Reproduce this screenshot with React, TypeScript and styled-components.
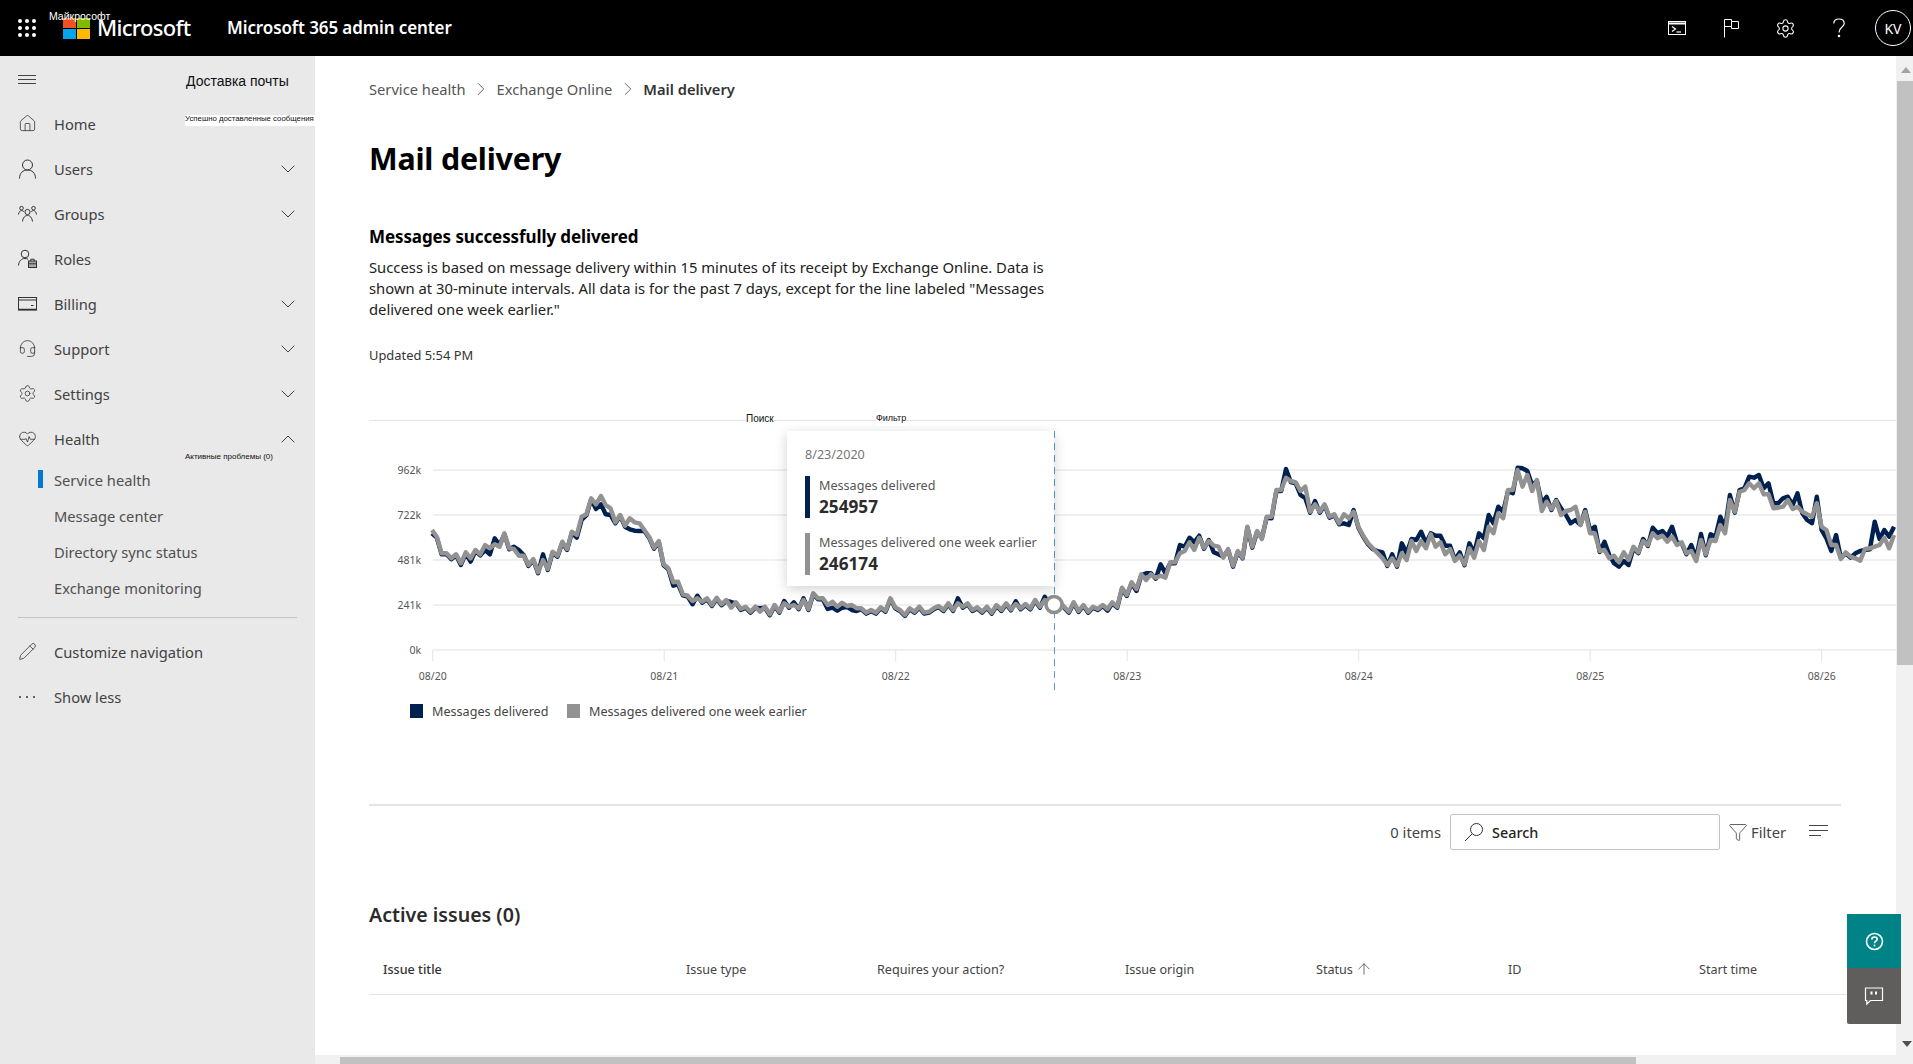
import React from "react";
import styled, { createGlobalStyle } from "styled-components";
import { ChevronDown, ChevronUp, Funnel, HeartPulse, Headset, House, Pencil, Settings, ArrowUp, ChevronRight } from "lucide-react";

const Global = createGlobalStyle`
  html, body { margin: 0; padding: 0; height: 100%; overflow: hidden; background: #fff; }
  body { font-family: "Noto Sans", "Open Sans", sans-serif; color: #323130; }
  * { box-sizing: border-box; }
`;

const Page = styled.div`
  width: 1913px; height: 1064px; display: flex; flex-direction: column; position: relative; overflow: hidden;
`;
const Header = styled.header`
  height: 56px; background: #000; color: #fff; display: flex; align-items: center; position: relative; flex: none;
`;
const Waffle = styled.div`
  margin-left: 18px; width: 18px; display: grid; grid-template-columns: repeat(3, 4px); gap: 3px; flex: none;
  span { width: 4px; height: 4px; background: #fff; border-radius: 50%; }
`;
const LogoMark = styled.div`
  margin-left: 27px; width: 27px; height: 21px; display: grid; grid-template-columns: 13px 13px; grid-template-rows: 10px 10px; gap: 1px; flex: none;
`;
const LogoSquare = styled.span<{ $c: string }>` background: ${p => p.$c}; `;
const Brand = styled.span`
  margin-left: 7px; font-size: 22px; font-weight: 500; letter-spacing: -0.7px; width: 130px; margin-top: -2px;
`;
const AppName = styled.span`
  font-size: 17px; font-weight: 600; letter-spacing: -0.1px; margin-top: -1px;
`;
const HeaderTools = styled.div`
  margin-left: auto; display: flex; align-items: center; padding-right: 2px;
`;
const ToolIcon = styled.span`
  width: 54px; display: flex; align-items: center; justify-content: center; color: #fff;
`;
const Avatar = styled.span`
  width: 36px; height: 36px; border: 1px solid #fff; border-radius: 50%; display: flex; align-items: center; justify-content: center; font-size: 14px; margin-left: 9px;
`;
const OverLabel = styled.span<{ $x: number; $y: number; $size: number; $white?: boolean; $bg?: boolean; $w?: number }>`
  position: absolute; left: ${p => p.$x}px; top: ${p => p.$y}px; font-family: "Liberation Sans", Arial, sans-serif; font-size: ${p => p.$size}px;
  line-height: ${p => (p.$bg ? "7px" : "1")}; white-space: nowrap; color: ${p => (p.$white ? "#fff" : "#111")};
  ${p => (p.$bg ? "background: #fff; padding-bottom: 4px;" : "")}
  ${p => (p.$w ? `width: ${p.$w}px;` : "")}
`;

const Body = styled.div` flex: 1; display: flex; min-height: 0; `;
const Sidebar = styled.nav`
  width: 315px; flex: none; background: #e9e9e9; position: relative; display: flex; flex-direction: column;
`;
const BurgerRow = styled.div`
  height: 45px; flex: none; padding: 0 0 0 18px; display: flex; align-items: center;
`;
const Burger = styled.div`
  width: 18px; height: 9px; border-top: 1px solid #444; border-bottom: 1px solid #444; position: relative; margin-top: 1px;
  &::after { content: ""; position: absolute; left: 0; right: 0; top: 3px; height: 1px; background: #444; }
`;
const NavRow = styled.div`
  height: 45px; flex: none; display: flex; align-items: center; padding-left: 18px; padding-right: 15px; color: #424242; font-size: 14.7px;
`;
const NavIcon = styled.span`
  width: 36px; flex: none; display: flex; align-items: center; color: #333;
`;
const NavText = styled.span` flex: 1; padding-top: 1px; `;
const SubRow = styled.div<{ $active?: boolean }>`
  height: 36px; flex: none; display: flex; align-items: center; padding: 1px 0 0 54px; font-size: 14.7px; color: #505050; position: relative;
  ${p => p.$active ? `&::before { content: ""; position: absolute; left: 38px; top: 9px; width: 5px; height: 18px; background: #0078d4; }` : ""}
`;
const SideDivider = styled.div`
  height: 1px; background: #c4c4c4; margin: 12px 18px 11px; flex: none;
`;

const MainColumn = styled.div` flex: 1; display: flex; flex-direction: column; min-width: 0; `;
const MainRow = styled.div` flex: 1; display: flex; min-height: 0; `;
const Content = styled.main`
  flex: 1; min-width: 0; padding: 21px 0 0 54px; overflow: hidden;
`;
const Crumbs = styled.div`
  display: flex; align-items: center; font-size: 14.7px; line-height: 24px; color: #555; height: 24px;
`;
const CrumbSep = styled.span` width: 31px; display: flex; justify-content: center; color: #555; `;
const CrumbCurrent = styled.span` font-weight: 600; font-size: 14.7px; color: #333; `;
const Title = styled.h1`
  margin: 38px 0 0; font-size: 30.4px; line-height: 40px; font-weight: 700; color: #000; letter-spacing: -0.2px;
`;
const SubHead = styled.h2`
  margin: 46px 0 0; font-size: 17px; line-height: 24px; font-weight: 700; color: #000; letter-spacing: -0.1px;
`;
const Para = styled.p`
  margin: 8px 0 0; width: 700px; font-size: 14.8px; line-height: 21px; color: #222;
`;
const Updated = styled.div`
  margin-top: 26px; font-size: 12.9px; line-height: 18px; color: #333;
`;
const ChartBox = styled.section`
  margin-top: 56px; height: 270px; position: relative; margin-left: 0;
  svg { display: block; }
`;
const Tooltip = styled.div`
  position: absolute; left: 418px; top: 11px; width: 267px; height: 155px; background: #fff; box-shadow: 0 3px 12px rgba(0,0,0,0.18); padding: 15px 18px;
`;
const TipDate = styled.div` font-size: 12.6px; line-height: 18px; color: #777; margin-bottom: 12px; `;
const TipRow = styled.div<{ $c: string }>`
  height: 42px; border-left: 5px solid ${p => p.$c}; padding: 1px 0 0 9px; margin-bottom: 15px;
`;
const TipLabel = styled.div` font-size: 12.6px; line-height: 18px; color: #555; white-space: nowrap; `;
const TipValue = styled.div` font-size: 17.2px; line-height: 24px; font-weight: 700; color: #2b2b2b; `;
const Legend = styled.div`
  margin-top: 11px; height: 20px; display: flex; align-items: center; padding-left: 41px; font-size: 12.6px; color: #444;
`;
const LegendItem = styled.span<{ $w: number }>` display: flex; align-items: center; width: ${p => p.$w}px; flex: none; white-space: nowrap; `;
const Swatch = styled.span<{ $c: string }>`
  width: 13px; height: 14px; background: ${p => p.$c}; margin-right: 9px; flex: none;
`;
const Divider = styled.div`
  margin-top: 83px; margin-right: 55px; height: 2px; background: #e4e4e4;
`;
const Toolbar = styled.div`
  margin-top: 8px; margin-right: 55px; height: 36px; display: flex; align-items: center; font-size: 14.8px; color: #444;
`;
const ItemCount = styled.span` margin-left: auto; margin-right: 9px; `;
const SearchBox = styled.div`
  width: 270px; height: 36px; border: 1px solid #c4c4c4; border-radius: 2px; display: flex; align-items: center; padding-left: 13px; gap: 8px; color: #222; font-weight: 500; font-size: 14.4px;
`;
const FilterBtn = styled.span` margin-left: 8px; display: flex; align-items: center; gap: 3px; width: 81px; `;
const SortLines = styled.span`
  width: 19px; height: 12px; margin-right: 13px; margin-top: -2px; flex: none; position: relative; border-top: 1px solid #444;
  &::before { content: ""; position: absolute; left: 0; top: 4px; width: 19px; height: 1px; background: #444; }
  &::after { content: ""; position: absolute; left: 0; top: 9px; width: 12px; height: 1px; background: #444; }
`;
const SectionHead = styled.h3`
  margin: 52px 0 0; font-size: 19.6px; line-height: 26px; font-weight: 600; color: #2b2b2b;
`;
const TableHead = styled.div`
  margin-top: 16px; height: 51px; border-bottom: 1px solid #e4e4e4; display: grid; grid-template-columns: 303px 191px 248px 191px 192px 191px 1fr; align-items: center; padding-left: 14px; font-size: 12.6px; color: #444;
`;
const ColHead = styled.span<{ $strong?: boolean }>`
  display: flex; align-items: center; gap: 2px;
  ${p => p.$strong ? "font-weight: 500; color: #333;" : ""}
`;

const VScroll = styled.div`
  width: 17px; flex: none; background: #f1f1f1; padding-top: 25px; position: relative;
  &::before { content: ""; position: absolute; left: 5px; top: 11px; border: 5px solid transparent; border-top: 0; border-bottom: 6px solid #a3a3a3; }
  &::after { content: ""; position: absolute; left: 6px; bottom: 8px; border: 5px solid transparent; border-bottom: 0; border-top: 6px solid #505050; }
`;
const VThumb = styled.div` height: 584px; background: #c1c1c1; margin-left: 1px; `;
const HScroll = styled.div`
  height: 9px; flex: none; background: #f1f1f1; padding: 2px 277px 0 25px;
`;
const HThumb = styled.div` height: 7px; background: #c1c1c1; `;
const FloatStack = styled.div`
  position: absolute; left: 1847px; top: 914px; width: 54px; display: flex; flex-direction: column;
`;
const FloatBtn = styled.div<{ $c: string; $h: number; $round?: boolean }>`
  height: ${p => p.$h}px; background: ${p => p.$c}; display: flex; align-items: center; justify-content: center; color: #fff;
  ${p => (p.$round ? "border-radius: 0 0 0 2px;" : "")}
`;

/* ---- chart data, traced from the picture: one value per half hour ---- */
const segA = [195,215,265,265,280,268,295,262,280,255,268,240,250,238,245,205,250,252,272,272,300,282,322,285,312,260,272,230,252,200,210,155,148,100,118,93,120,130,172,150,182,160,172,175,195,215,248,228,298,310,352,350,388,392,408,400,410,400,420,398,418,405,428,412,432,425,440,425,440,425,448,420,440,415,425,420,430,405,432];
const segB = [520,535,535,555,545,560,548,558,555,565,565,578,570,578,562,572,535,562,570,585,565,575,560,578,575,565,558,570,550,570,550,560,550,570,562,575,560,578,555,570,550,568,552,565,552,565,540,560,540,565,555,545];
const segC = [425,440,412,438,420,440,425,432,420,432,412,425,368,390,352,372,328,345,328,338,332,338,292,292,265,258,232,255,218,248,228,242,245,278,252,302,258,278,185,245,198,222,155,155,75,75,38,48,52,78,65,140,118,140,118,155,148,175,148,160,140,185,212,235,250,265,280,300,280,302,265,285,228,258,228,250,208,245,232,268,252,288,272,298,250,278,228,255,185];
const segD = [205,145,160,75,75,15,65,30,78,45,138,110,132,108,150,138,135,125,180,140,205,205,258,255,280,272,292,262,285,245,262,228,240,205,220,212,230,215,240,232,265,258,288,225,268,225,228,180,205,105,140,80,75,55,70,55,88,88,130,128,125,105,132,125,140,148,155,115,185,195,240,240,282,262,275,280,287,252,250,245,240,218,250,210];
const deltas: Record<number, number> = {
  0:10,6:5,8:10,11:15,12:18,13:-18,14:-5,17:-7,18:-17,19:-2,23:-17,26:3,30:8,31:10,34:14,35:25,36:28,37:20,41:33,42:25,43:23,50:10,51:8,54:10,55:-8,62:-17,68:-10,73:-7,75:-8,77:-5,
  82:12,83:18,84:12,85:15,87:15,88:8,109:-15,121:-8,127:-10,128:-15,
  140:5,146:6,148:-20,149:-3,151:-34,152:-13,155:-25,156:-13,157:-14,158:-23,159:-6,161:-3,162:20,163:23,164:-3,168:2,172:-4,174:5,177:-26,180:12,181:35,183:-10,189:27,190:20,191:-5,196:-7,197:-18,199:-12,
  201:-30,202:-20,203:-6,204:-33,205:-28,206:-15,207:-3,208:-33,209:-20,210:-26,211:-10,212:-3,213:-10,215:-15,216:-13,217:-23,218:-35,219:-35,
  220:-30,221:-20,222:-20,224:10,225:-7,226:-55,227:-12,228:-18,230:-23,231:-15,233:-3,234:-20,235:12,236:40,237:40,238:0,239:-5,240:-10,241:-20,243:-25,244:-10,245:23,246:13,247:26,248:15,249:5,251:-6,253:-17,254:-15,255:-14,256:-15,257:-30,258:-8,260:3,261:-18,262:-8,263:-18,265:-17,266:-13,267:-25,268:-15,269:-15,271:-5,272:-5,273:-20,274:-32,275:-25,276:-18,277:-33,278:-15,279:-13,280:-25,281:-10,282:-12,283:-40,284:5,285:17,286:20,287:-20,288:10,289:25,290:18,291:-30,292:-2,295:-15,296:-29,299:-75,300:-18,301:-23,302:-35,303:-25,
};
const greyY = [
  ...segA.map(v => 465 + v / 3),
  ...segB.map(v => 420 + v / 3),
  ...segC.map(v => 465 + v / 3),
  ...segD.map(v => 465 + v / 3),
];
const stepX = (i: number) => 432 + i * 4.825;
const toPoints = (ys: number[]) => ys.map((y, i) => `${stepX(i).toFixed(1)},${y.toFixed(1)}`).join(" ");
const greyPts = toPoints(greyY);
const darkPts = toPoints(greyY.map((y, i) => y + (deltas[i] ?? 3) / 3));

const yTicks: [string, number][] = [["962k", 470], ["722k", 515], ["481k", 560], ["241k", 605], ["0k", 650]];
const days = ["08/20", "08/21", "08/22", "08/23", "08/24", "08/25", "08/26"];

const ChartDrawing = () => (
  <svg width={1527} height={270} viewBox="369 420 1527 270" fontFamily="Noto Sans, sans-serif">
    <line x1={369} x2={1896} y1={420.5} y2={420.5} stroke="#e3e3e3" strokeWidth={1} />
    {yTicks.map(([label, y]) => (
      <g key={label}>
        <line x1={433} x2={1896} y1={y} y2={y} stroke="#efefef" strokeWidth={2} />
        <text x={421} y={y + 4} textAnchor="end" fontSize={10.5} fill="#555">{label}</text>
      </g>
    ))}
    {days.map((d, i) => {
      const x = 432.7 + i * 231.5;
      return (
        <g key={d}>
          <line x1={x} x2={x} y1={650} y2={661} stroke="#e4e4e4" strokeWidth={1} />
          <text x={x} y={680} textAnchor="middle" fontSize={10.5} fill="#555">{d}</text>
        </g>
      );
    })}
    <polyline points={darkPts} fill="none" stroke="#002050" strokeWidth={4.4} strokeLinejoin="round" />
    <polyline points={greyPts} fill="none" stroke="#929292" strokeWidth={4.4} strokeLinejoin="round" />
    <line x1={1054.5} x2={1054.5} y1={431} y2={690} stroke="#5a9bd0" strokeWidth={1} strokeDasharray="7 5" />
    <circle cx={1054} cy={604.5} r={8} fill="#fff" stroke="#8f8f8f" strokeWidth={3.6} />
  </svg>
);

const TerminalIcon = () => (
  <svg width="20" height="18" viewBox="0 0 20 18" fill="none" stroke="#fff">
    <rect x="1.5" y="2.5" width="17" height="13" strokeWidth="1" />
    <line x1="1.5" y1="4.5" x2="18.5" y2="4.5" strokeWidth="2" />
    <path d="M5 7.5 L8.5 10 L5 12.5" strokeWidth="1.2" />
    <line x1="9.5" y1="13" x2="14" y2="13" strokeWidth="1.2" />
  </svg>
);
const FlagIcon = () => (
  <svg width="18" height="20" viewBox="0 0 18 20" fill="none" stroke="#fff" strokeWidth="1">
    <path d="M2.5 19.5 V1.5 H9.5 V3.5 H16.5 V10.5 H9.5 V8.5 H2.5" />
    <line x1="9.5" y1="3.5" x2="9.5" y2="8.5" />
  </svg>
);
const Question = () => (
  <svg width="14" height="20" viewBox="0 0 14 20" fill="none" stroke="#fff" strokeWidth="1.2">
    <path d="M1.8 5.5 C1.8 2.8 4 1 7 1 C10 1 12.2 2.8 12.2 5.4 C12.2 9 7 9.2 7 14.5" />
    <circle cx="7" cy="18" r="0.7" fill="#fff" />
  </svg>
);
const GroupsIcon = () => (
  <svg width="19" height="18" viewBox="0 0 19 18" fill="none" stroke="currentColor" strokeWidth="1">
    <circle cx="9.5" cy="7" r="2.6" /><path d="M4.5 16.5 C5 12.5 7 10.5 9.5 10.5 C12 10.5 14 12.5 14.5 16.5" />
    <circle cx="3.5" cy="3.2" r="1.8" /><path d="M0.5 9.5 C0.8 7 2 5.6 3.6 5.6 C4.5 5.6 5.2 6 5.8 6.6" />
    <circle cx="15.5" cy="3.2" r="1.8" /><path d="M18.5 9.5 C18.2 7 17 5.6 15.4 5.6 C14.5 5.6 13.8 6 13.2 6.6" />
  </svg>
);
const RolesIcon = () => (
  <svg width="19" height="19" viewBox="0 0 19 19" fill="none" stroke="currentColor" strokeWidth="1">
    <circle cx="7" cy="5" r="3.8" /><path d="M0.5 16.5 C0.8 12 3.5 9.5 7 9.5 C8 9.5 9 9.7 10 10.2" />
    <rect x="10.5" y="12" width="8" height="6.5" fill="currentColor" fillOpacity=".35" /><path d="M12.8 12 V10.2 H16.2 V12 M10.5 14.8 H18.5" />
  </svg>
);
const BillingIcon = () => (
  <svg width="19" height="14" viewBox="0 0 19 14" fill="none" stroke="currentColor">
    <rect x="0.5" y="0.5" width="18" height="12.5" strokeWidth="1" />
    <line x1="0.5" y1="3" x2="18.5" y2="3" strokeWidth="1" />
    <line x1="0.5" y1="12.5" x2="18.5" y2="12.5" strokeWidth="1.5" />
    <line x1="13" y1="8.5" x2="15.5" y2="8.5" strokeWidth="1" />
  </svg>
);
const UserIcon = () => (
  <svg width="19" height="20" viewBox="0 0 19 20" fill="none" stroke="currentColor" strokeWidth="1">
    <circle cx="9.5" cy="6" r="5" />
    <path d="M1.5 19.5 C1.5 14 5 11 9.5 11 C14 11 17.5 14 17.5 19.5" />
  </svg>
);
const MoreDots = () => (
  <svg width="18" height="4" viewBox="0 0 18 4" fill="currentColor">
    <circle cx="2" cy="2" r="1" /><circle cx="9" cy="2" r="1" /><circle cx="16" cy="2" r="1" />
  </svg>
);
const SearchIcon = () => (
  <svg width="20" height="20" viewBox="0 0 20 20" fill="none" stroke="#333" strokeWidth="1">
    <circle cx="12.5" cy="7.5" r="6" /><line x1="8.2" y1="11.8" x2="1" y2="19" />
  </svg>
);
const HelpCircle = () => (
  <svg width="19" height="19" viewBox="0 0 19 19" fill="none" stroke="#fff">
    <circle cx="9.5" cy="9.5" r="8" strokeWidth="1.6" />
    <path d="M6.8 7.4 C6.8 5.8 8 5 9.5 5 C11 5 12.2 5.9 12.2 7.2 C12.2 9 9.5 9.2 9.5 11.2" strokeWidth="1.6" />
    <circle cx="9.5" cy="13.6" r="1" fill="#fff" stroke="none" />
  </svg>
);
const ChatIcon = () => (
  <svg width="20" height="20" viewBox="0 0 20 20" fill="none" stroke="#fff" strokeWidth="1.2">
    <path d="M1.5 2 H18.5 V14.5 H6.5 L2.8 18 V14.5 H1.5 Z" />
    <rect x="6.5" y="5.5" width="2" height="3" fill="#fff" stroke="none" /><rect x="11" y="5.5" width="2" height="3" fill="#fff" stroke="none" />
  </svg>
);

const ico = { size: 19, strokeWidth: 1 };
const mainNav: { label: string; icon: React.ReactNode; chevron?: boolean }[] = [
  { label: "Home", icon: <House {...ico} /> },
  { label: "Users", icon: <UserIcon />, chevron: true },
  { label: "Groups", icon: <GroupsIcon />, chevron: true },
  { label: "Roles", icon: <RolesIcon /> },
  { label: "Billing", icon: <BillingIcon />, chevron: true },
  { label: "Support", icon: <Headset {...ico} />, chevron: true },
  { label: "Settings", icon: <Settings {...ico} />, chevron: true },
];
const subNav = ["Service health", "Message center", "Directory sync status", "Exchange monitoring"];
const columns = ["Issue type", "Requires your action?", "Issue origin"];
const logo = ["#f25022", "#7fba00", "#00a4ef", "#ffb900"];

export default function App() {
  return (
    <Page>
      <Global />
      <Header>
        <Waffle>{Array.from({ length: 9 }, (_, i) => <span key={i} />)}</Waffle>
        <LogoMark>{logo.map(c => <LogoSquare key={c} $c={c} />)}</LogoMark>
        <Brand>Microsoft</Brand>
        <AppName>Microsoft 365 admin center</AppName>
        <HeaderTools>
          <ToolIcon><TerminalIcon /></ToolIcon>
          <ToolIcon><FlagIcon /></ToolIcon>
          <ToolIcon><Settings size={21} strokeWidth={1.2} /></ToolIcon>
          <ToolIcon><Question /></ToolIcon>
          <Avatar>KV</Avatar>
        </HeaderTools>
        <OverLabel $x={49} $y={11} $size={10.5} $white>Майкрософт</OverLabel>
      </Header>
      <Body>
        <Sidebar>
          <BurgerRow><Burger /></BurgerRow>
          {mainNav.map(n => (
            <NavRow key={n.label}>
              <NavIcon>{n.icon}</NavIcon>
              <NavText>{n.label}</NavText>
              {n.chevron && <ChevronDown size={24} strokeWidth={1} />}
            </NavRow>
          ))}
          <NavRow>
            <NavIcon><HeartPulse {...ico} /></NavIcon>
            <NavText>Health</NavText>
            <ChevronUp size={24} strokeWidth={1} />
          </NavRow>
          {subNav.map((s, i) => <SubRow key={s} $active={i === 0}>{s}</SubRow>)}
          <SideDivider />
          <NavRow>
            <NavIcon><Pencil {...ico} /></NavIcon>
            <NavText>Customize navigation</NavText>
          </NavRow>
          <NavRow>
            <NavIcon><MoreDots /></NavIcon>
            <NavText>Show less</NavText>
          </NavRow>
          <OverLabel $x={186} $y={18} $size={14}>Доставка почты</OverLabel>
          <OverLabel $x={185} $y={59} $size={7.8} $bg $w={130}>Успешно доставленные сообщения</OverLabel>
          <OverLabel $x={185} $y={397} $size={8}>Активные проблемы (0)</OverLabel>
        </Sidebar>
        <MainColumn>
          <MainRow>
            <Content>
              <Crumbs>
                Service health
                <CrumbSep><ChevronRight size={22} strokeWidth={1} /></CrumbSep>
                Exchange Online
                <CrumbSep><ChevronRight size={22} strokeWidth={1} /></CrumbSep>
                <CrumbCurrent>Mail delivery</CrumbCurrent>
              </Crumbs>
              <Title>Mail delivery</Title>
              <SubHead>Messages successfully delivered</SubHead>
              <Para>
                Success is based on message delivery within 15 minutes of its receipt by Exchange Online. Data is<br />
                shown at 30-minute intervals. All data is for the past 7 days, except for the line labeled "Messages<br />
                delivered one week earlier."
              </Para>
              <Updated>Updated 5:54 PM</Updated>
              <ChartBox>
                <ChartDrawing />
                <Tooltip>
                  <TipDate>8/23/2020</TipDate>
                  <TipRow $c="#002050">
                    <TipLabel>Messages delivered</TipLabel>
                    <TipValue>254957</TipValue>
                  </TipRow>
                  <TipRow $c="#929292">
                    <TipLabel>Messages delivered one week earlier</TipLabel>
                    <TipValue>246174</TipValue>
                  </TipRow>
                </Tooltip>
                <OverLabel $x={377} $y={-5} $size={10} $bg>Поиск</OverLabel>
                <OverLabel $x={507} $y={-5} $size={9} $bg>Фильтр</OverLabel>
              </ChartBox>
              <Legend>
                <LegendItem $w={157}><Swatch $c="#002050" />Messages delivered</LegendItem>
                <LegendItem $w={260}><Swatch $c="#929292" />Messages delivered one week earlier</LegendItem>
              </Legend>
              <Divider />
              <Toolbar>
                <ItemCount>0 items</ItemCount>
                <SearchBox><SearchIcon />Search</SearchBox>
                <FilterBtn><Funnel size={20} strokeWidth={1} />Filter</FilterBtn>
                <SortLines />
              </Toolbar>
              <SectionHead>Active issues (0)</SectionHead>
              <TableHead>
                <ColHead $strong>Issue title</ColHead>
                {columns.map(c => <ColHead key={c}>{c}</ColHead>)}
                <ColHead>Status <ArrowUp size={18} strokeWidth={1} /></ColHead>
                <ColHead>ID</ColHead>
                <ColHead>Start time</ColHead>
              </TableHead>
            </Content>
            <VScroll><VThumb /></VScroll>
          </MainRow>
          <HScroll><HThumb /></HScroll>
        </MainColumn>
      </Body>
      <FloatStack>
        <FloatBtn $c="#008387" $h={54}><HelpCircle /></FloatBtn>
        <FloatBtn $c="#605e5c" $h={56} $round><ChatIcon /></FloatBtn>
      </FloatStack>
    </Page>
  );
}
